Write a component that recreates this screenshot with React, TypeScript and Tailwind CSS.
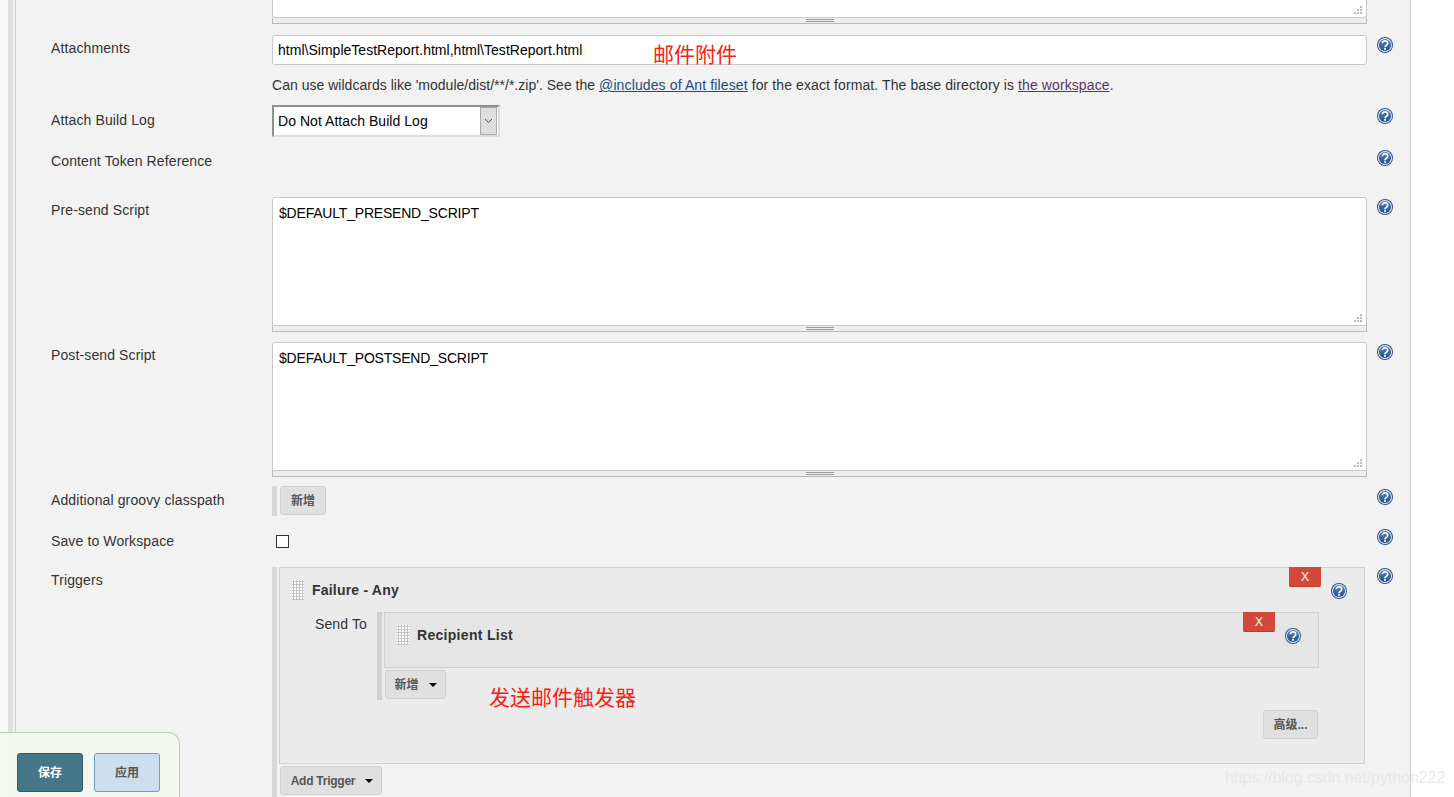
import type { ReactNode } from "react";

const cjk = { fontFamily: '"Liberation Sans", "Noto Sans CJK SC", sans-serif' };

function HelpIcon() {
  return (
    <svg width="16" height="16" viewBox="0 0 16 16" className="shrink-0">
      <defs>
        <linearGradient id="helpFill" x1="0" y1="0" x2="0" y2="1">
          <stop offset="0" stopColor="#5c82b4" />
          <stop offset="1" stopColor="#234f8c" />
        </linearGradient>
      </defs>
      <circle cx="8" cy="8" r="8" fill="#2a5491" />
      <circle cx="8" cy="8" r="7" fill="#e8eef6" />
      <circle cx="8" cy="8" r="6.1" fill="url(#helpFill)" />
      <path d="M5.3 6.2a2.7 2.4 0 1 1 4.2 2c-.9.6-1.5 1-1.5 2" fill="none" stroke="#ffffff" strokeWidth="1.7" />
      <rect x="7.1" y="11" width="1.8" height="1.8" fill="#ffffff" />
    </svg>
  );
}

function ResizeHandle() {
  return (
    <div className="h-[6px] bg-[#eeeeee] border-x border-b border-[#bbbbbb] flex flex-col items-center justify-center gap-px">
      <div className="w-[28px] h-px bg-[#999999]" />
      <div className="w-[28px] h-px bg-[#999999]" />
    </div>
  );
}

function ResizeGrip() {
  return (
    <svg width="10" height="10" viewBox="0 0 10 10" className="absolute right-[3px] bottom-[2px]">
      <g fill="#bbbbbb">
        <rect x="7" y="1" width="2" height="2" />
        <rect x="4" y="4" width="2" height="2" />
        <rect x="7" y="4" width="2" height="2" />
        <rect x="1" y="7" width="2" height="2" />
        <rect x="4" y="7" width="2" height="2" />
        <rect x="7" y="7" width="2" height="2" />
      </g>
    </svg>
  );
}

function ScriptBox({ value }: { value: string }) {
  return (
    <div>
      <div className="relative h-[129px] bg-white border border-[#c8c8c8] rounded-t-[3px] px-[6px] pt-[7px] text-[14px] leading-[16px] tracking-[-0.2px] text-black">
        {value}
        <ResizeGrip />
      </div>
      <ResizeHandle />
    </div>
  );
}

function DragHandle() {
  return (
    <div className="w-[12px] h-[20px] shrink-0 bg-white bg-[radial-gradient(#c4c4c4_1px,transparent_1.1px)] bg-[length:3px_3px]" />
  );
}

function Button({ children, caret, className }: { children: string; caret?: boolean; className: string }) {
  return (
    <div className={"flex items-center justify-center gap-[10px] h-[29px] bg-[#e0e0e0] border border-[#d0d0d0] rounded-[3px] text-[12px] font-bold text-[#555555] " + className}>
      {children}
      {caret ? <div className="w-0 h-0 border-x-[4px] border-x-transparent border-t-[4px] border-t-black" /> : null}
    </div>
  );
}

function CloseButton({ className }: { className: string }) {
  return (
    <div className={"absolute w-[32px] h-[20px] bg-[#d24939] border-b border-[#c03a2c] rounded-b-[2px] flex items-center justify-center text-[12px] text-white " + className}>
      X
    </div>
  );
}

function Row({ label, className, labelTop, helpTop, children }: {
  label: string;
  className: string;
  labelTop: string;
  helpTop?: string;
  children?: ReactNode;
}) {
  return (
    <div className={"flex shrink-0 " + className}>
      <div className={"w-[221px] shrink-0 text-[14px] leading-[16px] tracking-[0.12px] text-[#333333] " + labelTop}>{label}</div>
      <div className="w-[1095px] shrink-0">{children}</div>
      <div className={"ml-[10px] " + (helpTop || "")}>
        <HelpIcon />
      </div>
    </div>
  );
}

export default function App() {
  return (
    <div className="relative h-[797px] w-[1454px] overflow-hidden bg-white flex" style={cjk}>
      {/* left rails */}
      <div className="w-[8px] bg-[#f9f9f9]" />
      <div className="w-[5px] bg-[#e0e0e0]" />
      <div className="w-[2px] bg-[#f0f0f0]" />

      {/* main column */}
      <div className="w-[1396px] border-x border-[#d0d0d0] bg-[#f2f2f2] pl-[35px] flex flex-col overflow-hidden">
        {/* end of the textarea above */}
        <div className="ml-[221px] w-[1095px] shrink-0">
          <div className="relative h-[18px] bg-white border-x border-b border-[#c8c8c8] rounded-b-[3px]">
            <ResizeGrip />
          </div>
          <ResizeHandle />
        </div>

        <Row label="Attachments" className="mt-[11px] h-[30px]" labelTop="pt-[5px]" helpTop="pt-[2px]">
          <div className="h-[30px] bg-white border border-[#c8c8c8] rounded-[3px] px-[5px] text-[14px] leading-[28px] tracking-[0.02px] text-black">
            html\SimpleTestReport.html,html\TestReport.html
          </div>
        </Row>

        <div className="ml-[221px] mt-[12px] h-[16px] shrink-0 text-[14px] leading-[16px] tracking-[0.1px] text-[#333333]">
          <span className="tracking-[0.02px]">Can use wildcards like 'module/dist/**/*.zip'. See the </span>
          <span className="underline tracking-[0.12px] text-[#204a87]">@includes of Ant fileset</span> for the exact format. The base
          directory is <span className="underline text-[#5c3566]">the workspace</span>.
        </div>

        <Row label="Attach Build Log" className="mt-[12px] h-[32px]" labelTop="pt-[7px]" helpTop="pt-[3px]">
          <div className="w-[228px] h-[32px] bg-white border-2 border-t-[#8f8f8f] border-l-[#8f8f8f] border-r-[#dddddd] border-b-[#dddddd] flex items-center">
            <div className="flex-1 pl-[4px] text-[14px] tracking-[0.05px] text-black">Do Not Attach Build Log</div>
            <div className="w-[17px] h-[28px] mr-px bg-[#dedede] border border-[#aaaaaa] flex items-center justify-center">
              <svg width="9" height="6" viewBox="0 0 9 6">
                <path d="M1 1l3.5 3.5L8 1" fill="none" stroke="#555555" />
              </svg>
            </div>
          </div>
        </Row>

        <Row label="Content Token Reference" className="mt-[13px] h-[21px]" labelTop="pt-[3px]">
          <div />
        </Row>

        <Row label="Pre-send Script" className="mt-[26px] h-[135px]" labelTop="pt-[5px]" helpTop="pt-[2px]">
          <ScriptBox value="$DEFAULT_PRESEND_SCRIPT" />
        </Row>

        <Row label="Post-send Script" className="mt-[10px] h-[135px]" labelTop="pt-[5px]" helpTop="pt-[2px]">
          <ScriptBox value="$DEFAULT_POSTSEND_SCRIPT" />
        </Row>

        <Row label="Additional groovy classpath" className="mt-[9px] h-[30px]" labelTop="pt-[6px]" helpTop="pt-[3px]">
          <div className="flex h-[30px]">
            <div className="w-[5px] bg-[#d8d8d8]" />
            <Button className="ml-[3px] w-[46px]">新增</Button>
          </div>
        </Row>

        <Row label="Save to Workspace" className="mt-[16px] h-[20px]" labelTop="pt-[1px]" helpTop="-mt-[3px]">
          <div className="pl-[4px] pt-[3px]">
            <div className="w-[13px] h-[13px] bg-white border border-[#333333]" />
          </div>
        </Row>

        <Row label="Triggers" className="mt-[15px] h-[240px]" labelTop="pt-[5px]" helpTop="pt-[1px]">
          <div className="flex h-[240px]">
            <div className="w-[5px] bg-[#d8d8d8]" />
            <div className="ml-[2px] w-[1086px]">
              <div className="relative h-[197px] bg-[#ebebeb] border border-[#d0d0d0] pl-[12px] pt-[12px]">
                <CloseButton className="right-[43px] -top-px" />
                <div className="absolute left-[1051px] top-[15px]">
                  <HelpIcon />
                </div>
                <div className="flex items-center gap-[8px] h-[20px] text-[14px] font-bold tracking-[0.2px] text-[#333333]">
                  <DragHandle />
                  Failure - Any
                </div>
                <div className="flex mt-[12px]">
                  <div className="w-[85px] pl-[23px] pt-[4px] text-[14px] leading-[16px] tracking-[0.12px] text-[#333333] shrink-0">Send To</div>
                  <div className="flex">
                    <div className="w-[5px] h-[88px] bg-[#d0d0d0]" />
                    <div className="ml-[2px]">
                      <div className="relative w-[935px] h-[56px] bg-[#e5e5e5] border border-[#d0d0d0] pl-[12px] pt-[12px]">
                        <CloseButton className="right-[43px] -top-px" />
                        <div className="absolute left-[900px] top-[15px]">
                          <HelpIcon />
                        </div>
                        <div className="flex items-center gap-[8px] h-[20px] text-[14px] font-bold tracking-[0.3px] text-[#333333]">
                          <DragHandle />
                          Recipient List
                        </div>
                      </div>
                      <Button caret className="mt-[2px] ml-px w-[61px]">新增</Button>
                    </div>
                  </div>
                </div>
                <Button className="absolute left-[983px] top-[142px] w-[55px]">高级...</Button>
              </div>
              <Button caret className="mt-[2px] ml-px w-[102px] pl-[2px] tracking-[-0.25px]">Add Trigger</Button>
            </div>
          </div>
        </Row>
      </div>

      <div className="w-[25px] bg-white" />

      {/* red notes drawn over the page */}
      <div className="absolute left-[653px] top-[43px] text-[21px] leading-[24px] text-[#f82010]">邮件附件</div>
      <div className="absolute left-[489px] top-[686px] text-[21px] leading-[24px] text-[#f82010]">发送邮件触发器</div>

      {/* sticky save bar */}
      <div className="absolute left-0 bottom-0 w-[180px] h-[65px] bg-[#f3f7f0]/90 border-t border-r border-[#aed0b8] rounded-tr-[12px] flex gap-[11px] pl-[17px] pt-[20px]">
        <div className="w-[66px] h-[39px] bg-[#457689] border border-[#2f5a6c] rounded-[3px] flex items-center justify-center text-[12px] font-bold text-white">保存</div>
        <div className="w-[66px] h-[39px] bg-[#cddef0] border border-[#6e9bd0] rounded-[3px] flex items-center justify-center text-[12px] font-bold text-[#555555]">应用</div>
      </div>

      {/* watermark */}
      <div className="absolute left-[1225px] top-[768px] text-[16px] leading-[20px] tracking-[-0.07px] text-[#e4e4e4]/80">https://blog.csdn.net/python222</div>
    </div>
  );
}
